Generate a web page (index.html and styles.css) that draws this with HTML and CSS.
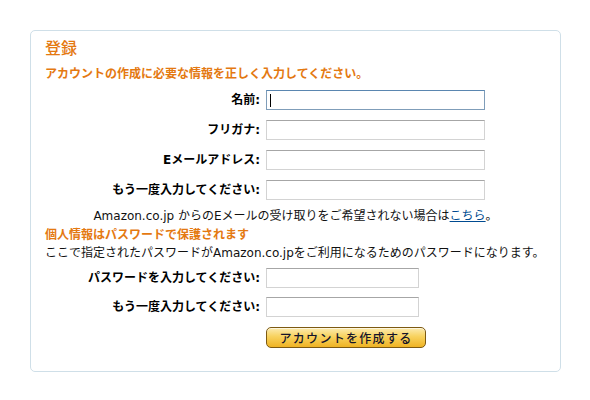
FILE: index.html
```html
<!DOCTYPE html>
<html lang="ja">
<head>
<meta charset="utf-8">
<title>登録</title>
<link rel="stylesheet" href="styles.css">
</head>
<body>
<div class="box">
  <h1 class="title">登録</h1>
  <p class="lead">アカウントの作成に必要な情報を正しく入力してください。</p>
  <div class="form">
    <label class="label">名前:</label>
    <div class="field"><input class="input focused" type="text"><span class="caret"></span></div>
    <label class="label">フリガナ:</label>
    <div class="field"><input class="input" type="text"></div>
    <label class="label">Eメールアドレス:</label>
    <div class="field"><input class="input" type="text"></div>
    <label class="label">もう一度入力してください:</label>
    <div class="field"><input class="input" type="text"></div>
  </div>
  <p class="note">Amazon.co.jp からのEメールの受け取りをご希望されない場合は<a class="link" href="#">こちら</a>。</p>
  <p class="sub">個人情報はパスワードで保護されます</p>
  <p class="desc">ここで指定されたパスワードがAmazon.co.jpをご利用になるためのパスワードになります。</p>
  <div class="form form-pw">
    <label class="label">パスワードを入力してください:</label>
    <div class="field"><input class="input short" type="password"></div>
    <label class="label">もう一度入力してください:</label>
    <div class="field"><input class="input short" type="password"></div>
    <span></span>
    <div class="field"><button class="btn" type="button">アカウントを作成する</button></div>
  </div>
</div>
</body>
</html>
```

FILE: styles.css
```css
html, body {
  margin: 0;
  padding: 0;
  background: #fff;
}
body {
  font-family: "DejaVu Sans", "Noto Sans CJK JP", sans-serif;
  font-size: 12px;
  color: #000;
  padding: 30px 0 0 30px;
}
.box {
  box-sizing: border-box;
  width: 531px;
  height: 342px;
  border: 1px solid #cfdfe8;
  border-radius: 5px;
  padding: 8px 14px 0 14px;
}
.title {
  margin: 0;
  font-size: 16px;
  font-weight: 500;
  line-height: 20px;
  color: #e47911;
}
.lead {
  margin: 7px 0 0 0;
  font-weight: bold;
  line-height: 16px;
  color: #e47911;
}
.form {
  display: grid;
  grid-template-columns: 215px auto;
  column-gap: 6px;
  row-gap: 10px;
  margin-top: 8px;
}
.form-pw {
  margin-top: 6px;
  row-gap: 9px;
}
.label {
  text-align: right;
  font-weight: bold;
  line-height: 20px;
  white-space: nowrap;
}
.field {
  position: relative;
  display: flex;
  align-items: center;
}
.input {
  box-sizing: border-box;
  width: 219px;
  height: 20px;
  margin: 0;
  padding: 0 3px;
  border: 1px solid #d3d3d3;
  border-top-color: #a6a6a6;
  background: #fff;
  outline: none;
}
.input.short {
  width: 153px;
}
.input.focused {
  border-color: #7f9db9;
  border-top-color: #5a86b0;
}
.caret {
  position: absolute;
  left: 4px;
  top: 4px;
  width: 1px;
  height: 13px;
  background: #000;
}
.note {
  margin: 7px 0 0 0;
  line-height: 18px;
  text-align: center;
  color: #111;
}
.link {
  color: #004b91;
  text-decoration: underline;
}
.sub {
  margin: 1px 0 0 0;
  line-height: 18px;
  font-weight: bold;
  color: #e47911;
}
.desc {
  margin: 0;
  line-height: 18px;
  color: #111;
  white-space: nowrap;
}
.btn {
  box-sizing: border-box;
  width: 160px;
  height: 21px;
  margin-top: 1px;
  padding: 0;
  border: 1px solid #7d5a12;
  border-radius: 5px;
  background: linear-gradient(#fcebb0 0%, #f8d25e 45%, #efb324 100%);
  font-family: "Noto Sans CJK JP", sans-serif;
  font-size: 12px;
  font-weight: 500;
  letter-spacing: 1.3px;
  color: #14142a;
  line-height: 19px;
  box-shadow: inset 0 1px 0 rgba(255,255,255,0.6);
}
```
